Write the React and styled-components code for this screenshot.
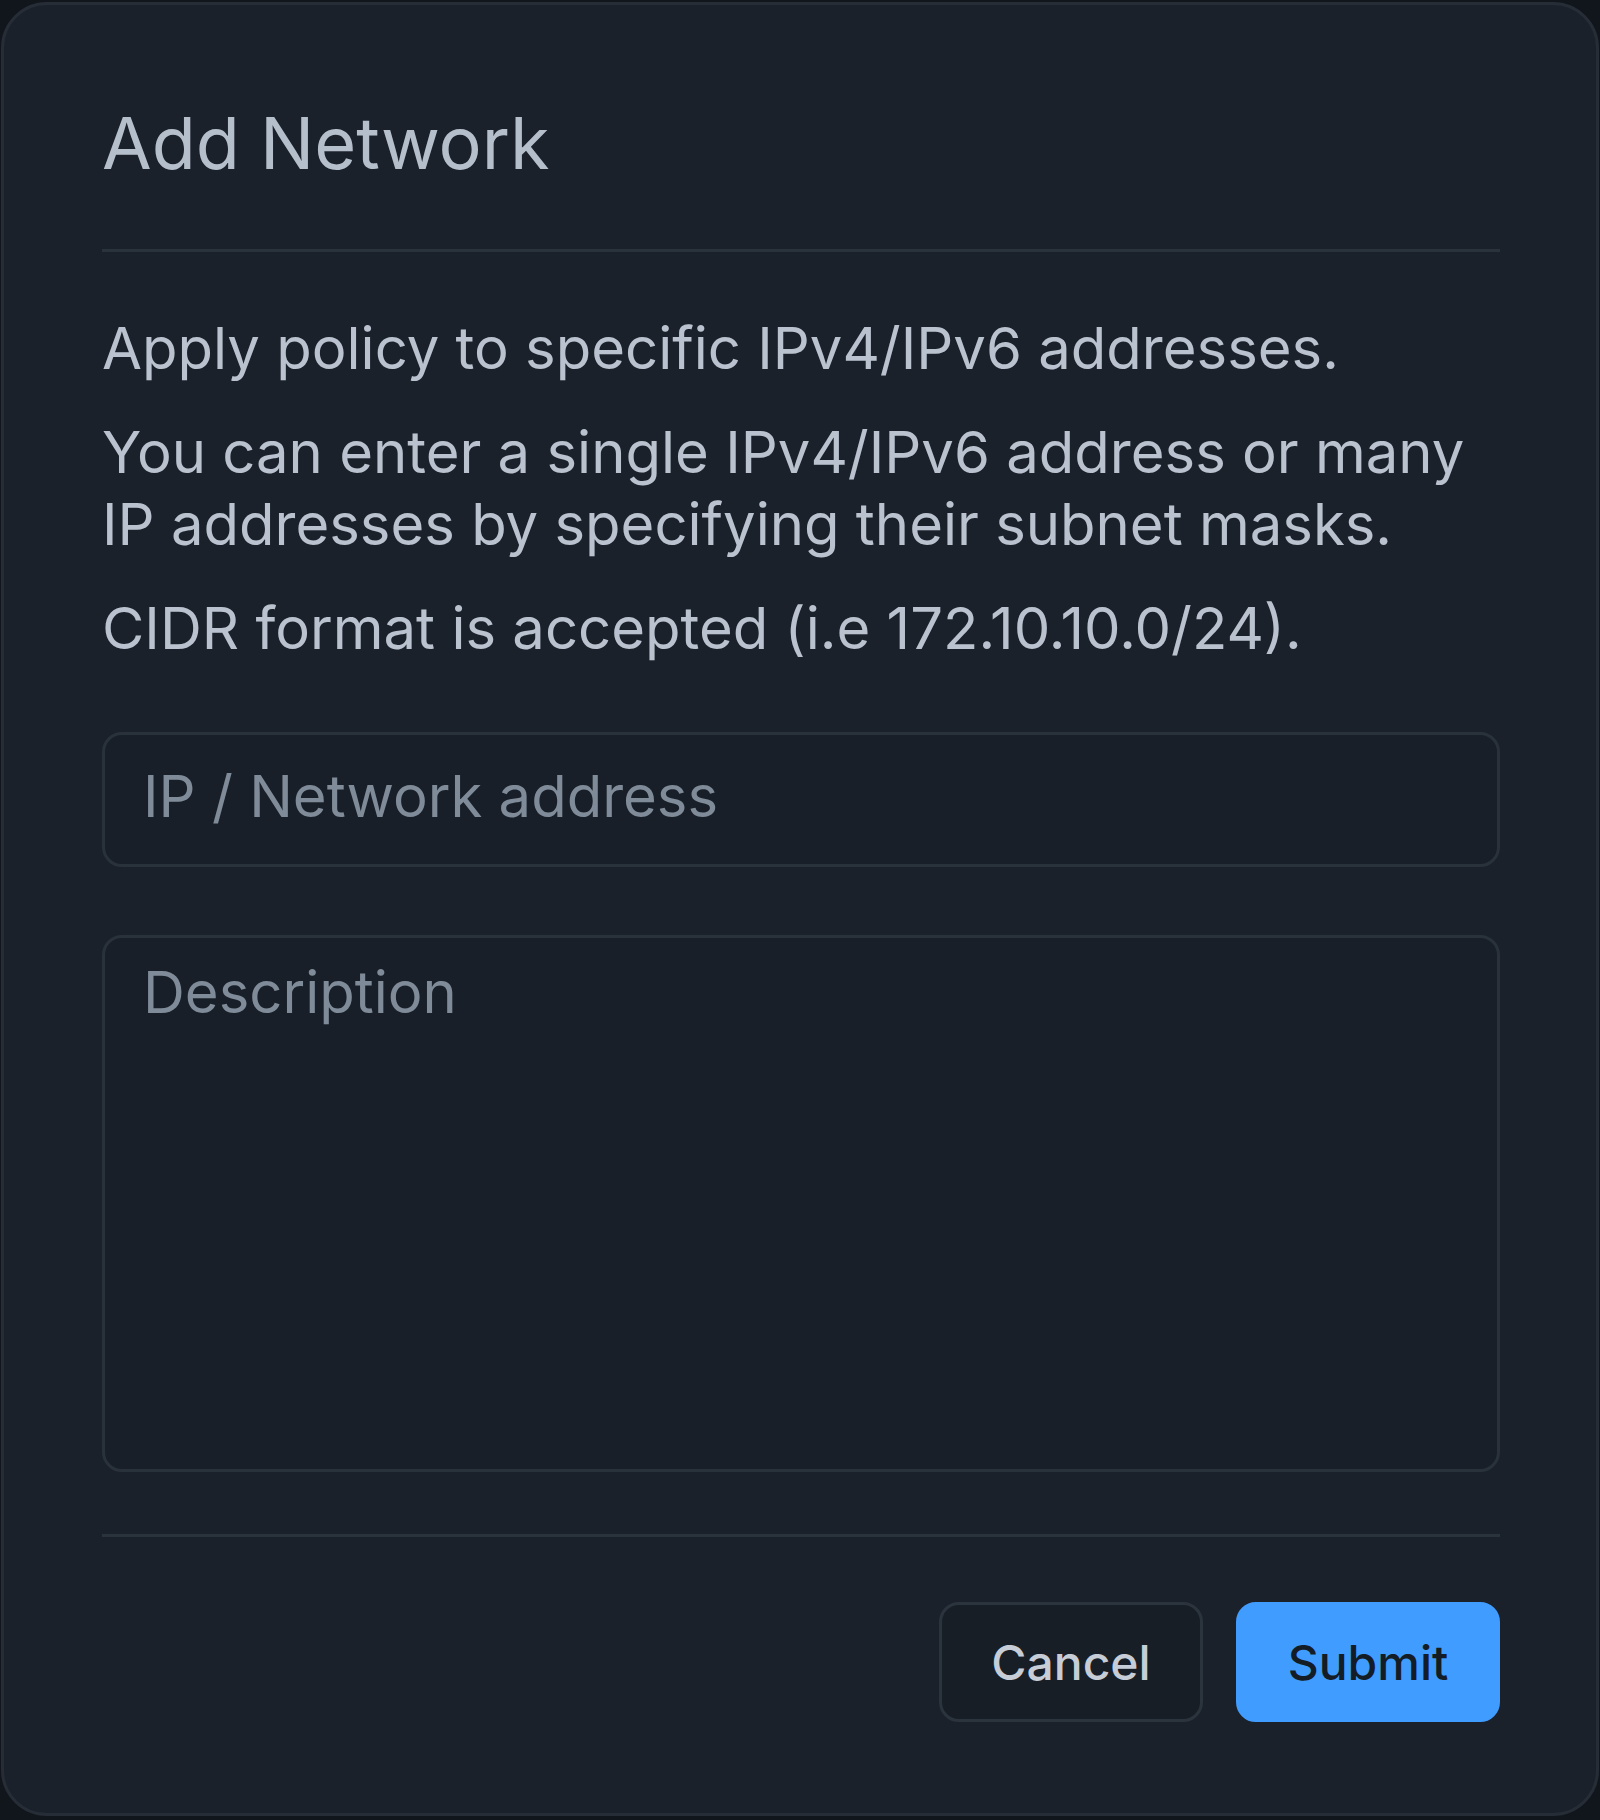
import React, { useState } from "react";
import styled, { createGlobalStyle } from "styled-components";

const GlobalStyle = createGlobalStyle`
  html, body {
    margin: 0;
    padding: 0;
    background: #11161c;
  }
  body {
    font-family: Inter, "Noto Sans", "Liberation Sans", sans-serif;
  }
  * {
    box-sizing: border-box;
  }
`;

const App = () => {
  const [address, setAddress] = useState("");
  const [description, setDescription] = useState("");

  const submitHandler = (e) => {
    e.preventDefault();
  };

  return (
    <>
      <GlobalStyle />
      <Wrapper>
        <Dialog onSubmit={submitHandler}>
          <Title>Add Network</Title>
          <Divider $top="63px" />
          <Body>
            <Text>Apply policy to specific IPv4/IPv6 addresses.</Text>
            <Text>
              You can enter a single IPv4/IPv6 address or many IP addresses by
              specifying their subnet masks.
            </Text>
            <Text>CIDR format is accepted (i.e 172.10.10.0/24).</Text>
          </Body>
          <Fields>
            <Input
              type="text"
              placeholder="IP / Network address"
              value={address}
              onChange={(e) => setAddress(e.target.value)}
            />
            <TextArea
              placeholder="Description"
              value={description}
              onChange={(e) => setDescription(e.target.value)}
            />
          </Fields>
          <Divider $top="62px" />
          <Actions>
            <Button type="button">Cancel</Button>
            <Button type="submit" $primary>
              Submit
            </Button>
          </Actions>
        </Dialog>
      </Wrapper>
    </>
  );
};

const Wrapper = styled.div`
  padding: 2px 1px 4px 1px;
  min-height: 1820px;
`;

const Dialog = styled.form`
  display: flex;
  flex-direction: column;
  height: 1814px;
  background: #1b212a;
  border: 3px solid #262d37;
  border-radius: 46px;
  padding: 95px 96px 0 98px;
`;

const Title = styled.h2`
  margin: 0;
  font-size: 72px;
  line-height: 1.2;
  font-weight: 400;
  color: #b5bfcb;
`;

const Divider = styled.hr`
  margin: ${(p) => p.$top || "62px"} 0 0 0;
  border: none;
  height: 3px;
  background: #2a323c;
`;

const Body = styled.div`
  display: flex;
  flex-direction: column;
  gap: 32px;
  margin-top: 60px;
`;

const Text = styled.p`
  margin: 0;
  font-size: 58px;
  line-height: 72px;
  color: #b9c2ce;
`;

const Fields = styled.div`
  display: flex;
  flex-direction: column;
  gap: 68px;
  margin-top: 68px;
`;

const fieldStyles = `
  width: 100%;
  font-family: Inter, "Noto Sans", "Liberation Sans", sans-serif;
  font-size: 58px;
  line-height: 72px;
  color: #c4ccd6;
  background: #191f28;
  border: 3px solid #29313b;
  border-radius: 20px;
  outline: none;
  &::placeholder {
    color: #7f8b98;
  }
`;

const Input = styled.input`
  ${fieldStyles}
  height: 135px;
  padding: 0 38px 7px;
`;

const TextArea = styled.textarea`
  ${fieldStyles}
  height: 537px;
  padding: 18px 38px;
  resize: none;
`;

const Actions = styled.div`
  display: flex;
  justify-content: flex-end;
  gap: 33px;
  margin-top: 65px;
`;

const Button = styled.button`
  width: 264px;
  height: 120px;
  font-family: Inter, "Noto Sans", "Liberation Sans", sans-serif;
  font-size: 48px;
  font-weight: 500;
  border-radius: 20px;
  cursor: pointer;
  border: 3px solid ${(p) => (p.$primary ? "#409cff" : "#2b333d")};
  background: ${(p) => (p.$primary ? "#409cff" : "#181e26")};
  color: ${(p) => (p.$primary ? "#141c26" : "#c6cdd6")};
`;

export default App;
